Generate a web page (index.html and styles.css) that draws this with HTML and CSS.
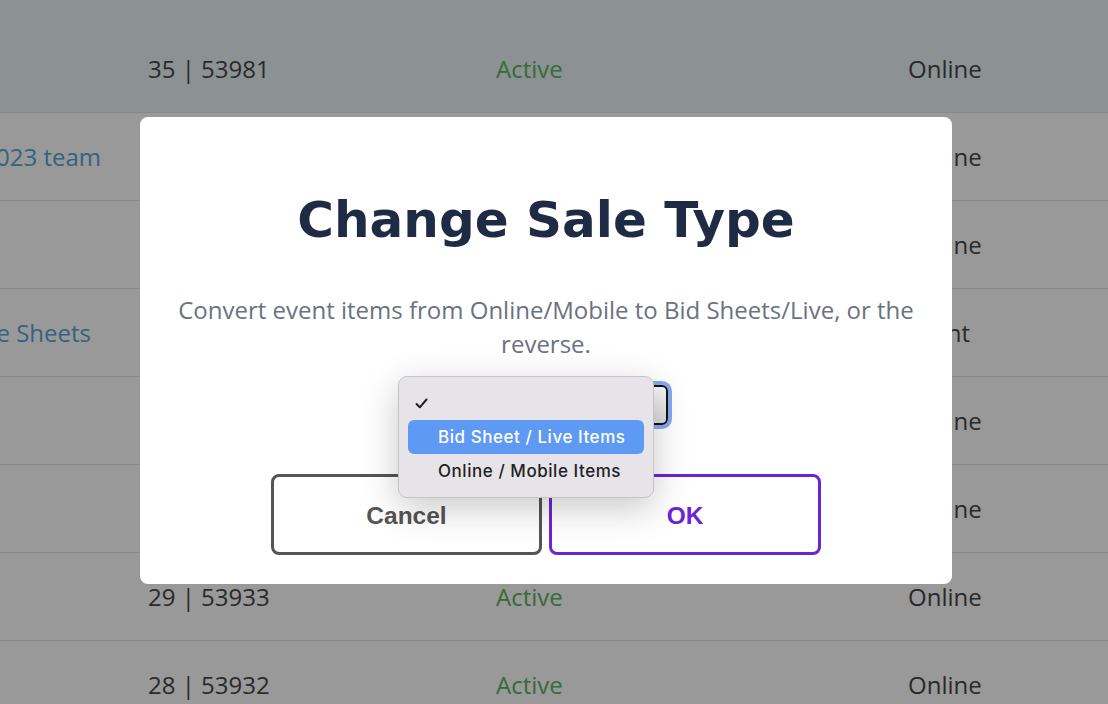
FILE: index.html
```html
<!DOCTYPE html>
<html lang="en">
<head>
<meta charset="utf-8">
<title>Change Sale Type</title>
<link rel="stylesheet" href="styles.css">
</head>
<body>
<div class="table">
  <div class="row row-first row-hl">
    <div class="c-name"></div>
    <div class="c-num">35 | 53981</div>
    <div class="c-status">Active</div>
    <div class="c-type">Online</div>
  </div>
  <div class="row">
    <div class="c-name c-name-a"><span class="link">Fall 2023 team</span></div>
    <div class="c-num">34 | 53980</div>
    <div class="c-status">Active</div>
    <div class="c-type">Online</div>
  </div>
  <div class="row">
    <div class="c-name"></div>
    <div class="c-num">33 | 53979</div>
    <div class="c-status">Active</div>
    <div class="c-type">Online</div>
  </div>
  <div class="row">
    <div class="c-name c-name-b"><span class="link">Live Sheets</span></div>
    <div class="c-num">32 | 53978</div>
    <div class="c-status">Active</div>
    <div class="c-type">Silent</div>
  </div>
  <div class="row">
    <div class="c-name"></div>
    <div class="c-num">31 | 53935</div>
    <div class="c-status">Active</div>
    <div class="c-type">Online</div>
  </div>
  <div class="row">
    <div class="c-name"></div>
    <div class="c-num">30 | 53934</div>
    <div class="c-status">Active</div>
    <div class="c-type">Online</div>
  </div>
  <div class="row">
    <div class="c-name"></div>
    <div class="c-num">29 | 53933</div>
    <div class="c-status">Active</div>
    <div class="c-type">Online</div>
  </div>
  <div class="row">
    <div class="c-name"></div>
    <div class="c-num">28 | 53932</div>
    <div class="c-status">Active</div>
    <div class="c-type">Online</div>
  </div>
</div>

<div class="overlay"></div>

<div class="modal">
  <h1 class="modal-title">Change Sale Type</h1>
  <p class="modal-text">Convert event items from Online/Mobile to Bid Sheets/Live, or the reverse.</p>
  <div class="select-wrap">
    <div class="select"></div>
    <div class="menu">
      <div class="menu-item menu-item-check">
        <svg class="check" width="13" height="11" viewBox="0 0 13 11"><path d="M1.5 6 L4.8 9.3 L11.5 1.5" fill="none" stroke="#222" stroke-width="2" stroke-linecap="round" stroke-linejoin="round"/></svg>
      </div>
      <div class="menu-item menu-item-active">Bid Sheet / Live Items</div>
      <div class="menu-item">Online / Mobile Items</div>
    </div>
  </div>
  <div class="actions">
    <button class="btn btn-cancel">Cancel</button>
    <button class="btn btn-ok">OK</button>
  </div>
</div>
</body>
</html>
```

FILE: styles.css
```css
* { box-sizing: border-box; }
html, body { margin: 0; padding: 0; }
body {
  width: 1108px;
  height: 704px;
  overflow: hidden;
  background: #ffffff;
  font-family: "Open Sans", "Noto Sans", sans-serif;
  position: relative;
}

.table { display: flex; flex-direction: column; }
.row {
  display: grid;
  grid-template-columns: 148px 348px 412px 200px;
  height: 88px;
  align-items: center;
  border-bottom: 1px solid #e2e2e2;
  font-size: 24px;
  color: #474747;
}
.row-first { height: 113px; padding-top: 25px; }
.row-hl { background: #e9f2f7; }
.c-name {
  display: flex;
  justify-content: flex-end;
  overflow: hidden;
  white-space: nowrap;
  padding-right: 47px;
}
.c-name-b { padding-right: 57px; }
.link { color: #55a6d6; }
.c-status { color: #5bb45d; }
.c-num, .c-type { white-space: nowrap; }

.overlay {
  position: absolute;
  inset: 0;
  background: rgba(0, 0, 0, 0.4);
}

.modal {
  position: absolute;
  left: 140px;
  top: 117px;
  width: 812px;
  height: 467px;
  background: #ffffff;
  border-radius: 8px;
  display: flex;
  flex-direction: column;
  align-items: center;
  padding-top: 69px;
}
.modal-title {
  margin: 0;
  font-family: "DejaVu Sans", "Noto Sans", sans-serif;
  font-weight: 700;
  font-size: 50px;
  line-height: 68px;
  color: #1f2a44;
}
.modal-text {
  margin: 39px 0 0;
  width: 780px;
  text-align: center;
  font-size: 24px;
  line-height: 34px;
  color: #6b7280;
}

.select-wrap {
  position: relative;
  width: 244px;
  height: 40px;
  margin-top: 24px;
}
.select {
  width: 100%;
  height: 100%;
  border: 2px solid #111;
  border-radius: 6px;
  background: linear-gradient(#f7f7f7, #dcdcdc);
  box-shadow: 0 0 0 4px #86a9ef;
}
.menu {
  position: absolute;
  left: -26px;
  top: -9px;
  width: 256px;
  height: 122px;
  background: #e6e4e8;
  border: 1px solid #c6c4c8;
  border-radius: 9px;
  box-shadow: 0 10px 36px rgba(0, 0, 0, 0.22);
  padding: 9px 9px;
  display: flex;
  flex-direction: column;
  font-family: "Inter", "Noto Sans", sans-serif;
  font-size: 17px;
  font-weight: 500;
  letter-spacing: 0.55px;
  color: #222;
}
.menu-item {
  height: 34px;
  flex: none;
  display: flex;
  align-items: center;
  padding-left: 30px;
  border-radius: 6px;
  white-space: nowrap;
}
.menu-item-check { padding-left: 7px; }
.menu-item-active { background: #5e9af4; color: #ffffff; }
.check { display: block; }

.actions {
  display: flex;
  gap: 7px;
  margin-top: 49px;
}
.btn {
  width: 272px;
  height: 81px;
  background: #ffffff;
  border-radius: 8px;
  font-family: "Liberation Sans", Arial, sans-serif;
  font-weight: 700;
  font-size: 24.5px;
  padding-top: 3px;
  cursor: pointer;
}
.btn-cancel { border: 3px solid #555555; color: #555555; width: 271px; }
.btn-ok { border: 3px solid #6a25d6; color: #6a25d6; }
```
